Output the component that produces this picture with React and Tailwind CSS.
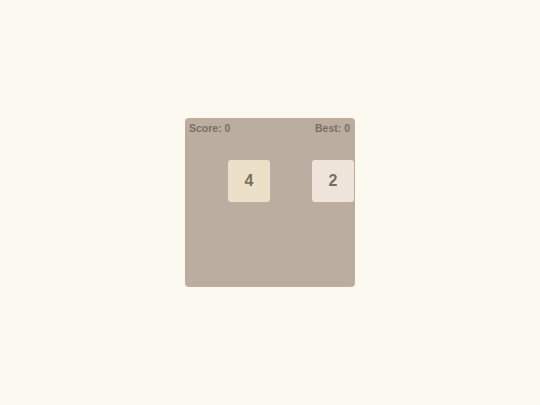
export default function App() {
  const cells = [
    null, null, null, null,
    null, 4, null, 2,
    null, null, null, null,
    null, null, null, null,
  ]
  const tileBg = { 2: 'bg-[#eee4da]', 4: 'bg-[#ede0c8]' }

  return (
    <div className="w-[540px] h-[405px] bg-[#fcf9f0] flex items-center justify-center font-['Liberation_Sans',Arial,sans-serif]">
      <div className="relative w-[170px] h-[169px] bg-[#bbada0] rounded-[4px]">
        <div className="absolute top-[3px] left-[4px] right-[5px] flex justify-between text-[10.5px] leading-[14px] font-bold text-[#7a6e65]">
          <span>Score: 0</span>
          <span>Best: 0</span>
        </div>
        <div className="grid grid-cols-[43px_42px_42px_43px] grid-rows-[42px_42px_42px_43px] w-full h-full">
          {cells.map((v, i) => (
            <div key={i} className="flex">
              {v && (
                <div className={`w-[42px] h-[42px] rounded-[3px] ${tileBg[v]} flex items-center justify-center text-[16px] font-bold text-[#776e65]`}>
                  {v}
                </div>
              )}
            </div>
          ))}
        </div>
      </div>
    </div>
  )
}
